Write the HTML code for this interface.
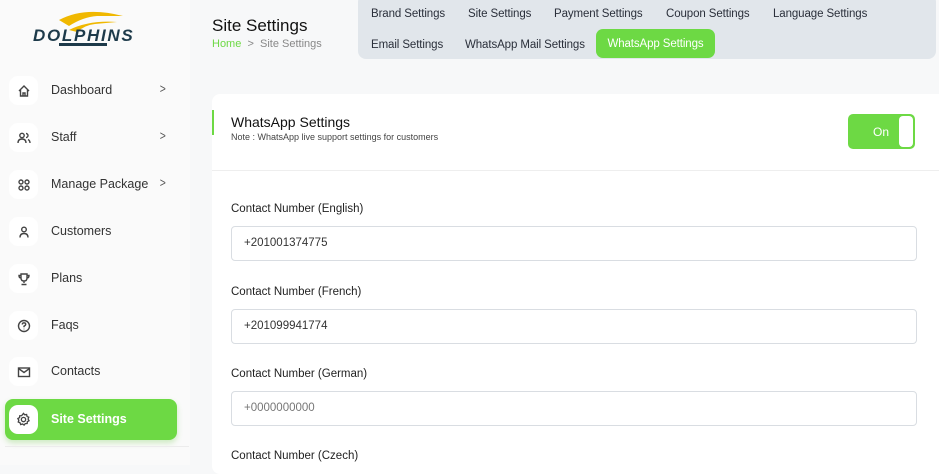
<!DOCTYPE html>
<html><head><meta charset="utf-8"><style>
*{box-sizing:border-box;margin:0;padding:0}
body{width:939px;height:465px;overflow:hidden;background:#f7f8f9;font-family:"Liberation Sans",sans-serif;color:#222;position:relative}
.side{position:absolute;left:0;top:0;width:190px;height:465px;background:#fafafa}
.item{position:absolute;left:5px;width:172px;height:41px;font-size:12.5px;color:#333}
.item .ic{position:absolute;left:4px;top:6px;width:29px;height:29px;border-radius:9px;background:#fff;display:flex;align-items:center;justify-content:center}
.item .lb{position:absolute;left:46px;top:13px}
.item .ch{position:absolute;left:154px;top:11px;font-size:13px;color:#555;transform:scaleX(.8)}
.item.act{background:#6dd944;border-radius:8px;box-shadow:0 3px 6px rgba(100,200,60,.3)}
.item.act .lb{color:#fff;font-weight:bold}
svg{stroke:#444;fill:none;stroke-width:1.4}
.tabs{position:absolute;left:358px;top:-6px;width:578px;height:65px;background:#e1e6eb;border-radius:8px}
.tab{position:absolute;font-size:11.5px;color:#2a2f3a;letter-spacing:-0.1px}
.card{position:absolute;left:212px;top:94px;width:740px;height:380px;background:#fff;border-radius:8px}
.lbl{position:absolute;left:231px;font-size:11.5px;color:#222}
.inp{position:absolute;left:231px;width:686px;height:35px;border:1px solid #d9dde2;border-radius:4px;font-size:11.5px;padding:10px 12px;color:#333}
</style></head><body>
<div class="side">
 <svg style="position:absolute;left:33px;top:8px" width="104" height="40" viewBox="0 0 104 40">
  <path d="M26 12 Q52 -2 90 8 L64 8 Q50 9 36 18Z" fill="#f0b800" stroke="none"/>
  <path d="M36 22 Q56 12 84 14 L62 16 Q52 17 44 24Z" fill="#f0b800" stroke="none"/>
  <text x="0" y="33" font-family="Liberation Sans" font-style="italic" font-weight="bold" font-size="17" fill="#1d3a4a" stroke="none" letter-spacing="0.3" textLength="100">DOLPHINS</text>
  <rect x="26" y="35" width="48" height="3" fill="#1d3a4a" stroke="none"/>
 </svg>
</div>
<div class="item" style="top:70px"><div class="ic"><svg width="14" height="14" viewBox="0 0 14 14"><path d="M2 7 L7 2 L12 7 M3.5 6 V12 H10.5 V6 M6 12 V9 H8 V12"/></svg></div><span class="lb">Dashboard</span><span class="ch">&gt;</span></div>
<div class="item" style="top:117px"><div class="ic"><svg width="14" height="14" viewBox="0 0 14 14"><circle cx="5" cy="4.5" r="2.2"/><path d="M1 12 Q1 8 5 8 Q9 8 9 12 M9 2.5 A2 2 0 0 1 9 6.5 M11 8.5 Q13 9.5 13 12"/></svg></div><span class="lb">Staff</span><span class="ch">&gt;</span></div>
<div class="item" style="top:164px"><div class="ic"><svg width="14" height="14" viewBox="0 0 14 14"><circle cx="4" cy="4" r="2"/><circle cx="10" cy="4" r="2"/><circle cx="4" cy="10" r="2"/><circle cx="10" cy="10" r="2"/></svg></div><span class="lb">Manage Package</span><span class="ch">&gt;</span></div>
<div class="item" style="top:211px"><div class="ic"><svg width="14" height="14" viewBox="0 0 14 14"><circle cx="7" cy="4.5" r="2.3"/><path d="M3 12.5 Q3 8.5 7 8.5 Q11 8.5 11 12.5"/></svg></div><span class="lb">Customers</span></div>
<div class="item" style="top:258px"><div class="ic"><svg width="14" height="14" viewBox="0 0 14 14"><path d="M4 2 H10 V6 Q10 9 7 9 Q4 9 4 6Z M4 3.5 H2 Q2 6 4 6 M10 3.5 H12 Q12 6 10 6 M7 9 V11 M4.5 12.5 H9.5"/></svg></div><span class="lb">Plans</span></div>
<div class="item" style="top:305px"><div class="ic"><svg width="14" height="14" viewBox="0 0 14 14"><circle cx="7" cy="7" r="5.5"/><path d="M5.3 5.5 Q5.3 3.8 7 3.8 Q8.7 3.8 8.7 5.3 Q8.7 6.5 7 7.2 V8.3 M7 9.8 V10.3"/></svg></div><span class="lb">Faqs</span></div>
<div class="item" style="top:351px"><div class="ic"><svg width="14" height="14" viewBox="0 0 14 14"><rect x="1.5" y="3" width="11" height="8.5"/><path d="M1.5 3.5 L7 7.5 L12.5 3.5"/></svg></div><span class="lb">Contacts</span></div>
<div class="item act" style="top:399px"><div class="ic"><svg width="15" height="15" viewBox="0 0 16 16"><circle cx="8" cy="8" r="2.3"/><path d="M8 1.5 L9.3 3 L11.3 2.7 L11.8 4.7 L13.6 5.6 L12.9 7.5 L13.9 9.3 L12.1 10.3 L11.9 12.3 L9.9 12.4 L8.6 14 L7 12.8 L5 13.4 L4.3 11.5 L2.4 10.7 L3 8.8 L2 7 L3.8 6 L4 4 L6 3.9Z"/></svg></div><span class="lb">Site Settings</span></div>
<div style="position:absolute;left:5px;top:446px;width:184px;height:1px;background:#ececec"></div>

<div style="position:absolute;left:212px;top:16px;font-size:17px;color:#111">Site Settings</div>
<div style="position:absolute;left:212px;top:38px;font-size:11px;color:#888"><span style="color:#6dd944">Home</span> &nbsp;&gt;&nbsp; Site Settings</div>

<div class="tabs">
 <span class="tab" style="left:13px;top:14px">Brand Settings</span>
 <span class="tab" style="left:110px;top:14px">Site Settings</span>
 <span class="tab" style="left:196px;top:14px">Payment Settings</span>
 <span class="tab" style="left:308px;top:14px">Coupon Settings</span>
 <span class="tab" style="left:415px;top:14px">Language Settings</span>
 <span class="tab" style="left:13px;top:45px">Email Settings</span>
 <span class="tab" style="left:107px;top:45px">WhatsApp Mail Settings</span>
 <span class="tab" style="left:238px;top:35px;width:119px;height:29px;background:#6dd944;border-radius:7px;color:#fff;text-align:center;padding-top:9px">WhatsApp Settings</span>
</div>

<div class="card"></div>
<div style="position:absolute;left:212px;top:110px;width:2px;height:25px;background:#6dd944"></div>
<div style="position:absolute;left:231px;top:114px;font-size:14px;color:#111">WhatsApp Settings</div>
<div style="position:absolute;left:231px;top:132px;font-size:9px;color:#444">Note : WhatsApp live support settings for customers</div>
<div style="position:absolute;left:848px;top:114px;width:67px;height:35px;background:#6dd944;border-radius:5px;color:#fff;font-size:12px;padding:11px 0 0 25px">On<div style="position:absolute;right:2px;top:2px;width:14px;height:31px;background:#fff;border-radius:4px"></div></div>
<div style="position:absolute;left:212px;top:170px;width:727px;height:1px;background:#eee"></div>

<div class="lbl" style="top:203px">Contact Number (English)</div>
<div class="inp" style="top:226px">+201001374775</div>
<div class="lbl" style="top:286px">Contact Number (French)</div>
<div class="inp" style="top:309px">+201099941774</div>
<div class="lbl" style="top:368px">Contact Number (German)</div>
<div class="inp" style="top:391px;color:#777">+0000000000</div>
<div class="lbl" style="top:450px">Contact Number (Czech)</div>
</body></html>
